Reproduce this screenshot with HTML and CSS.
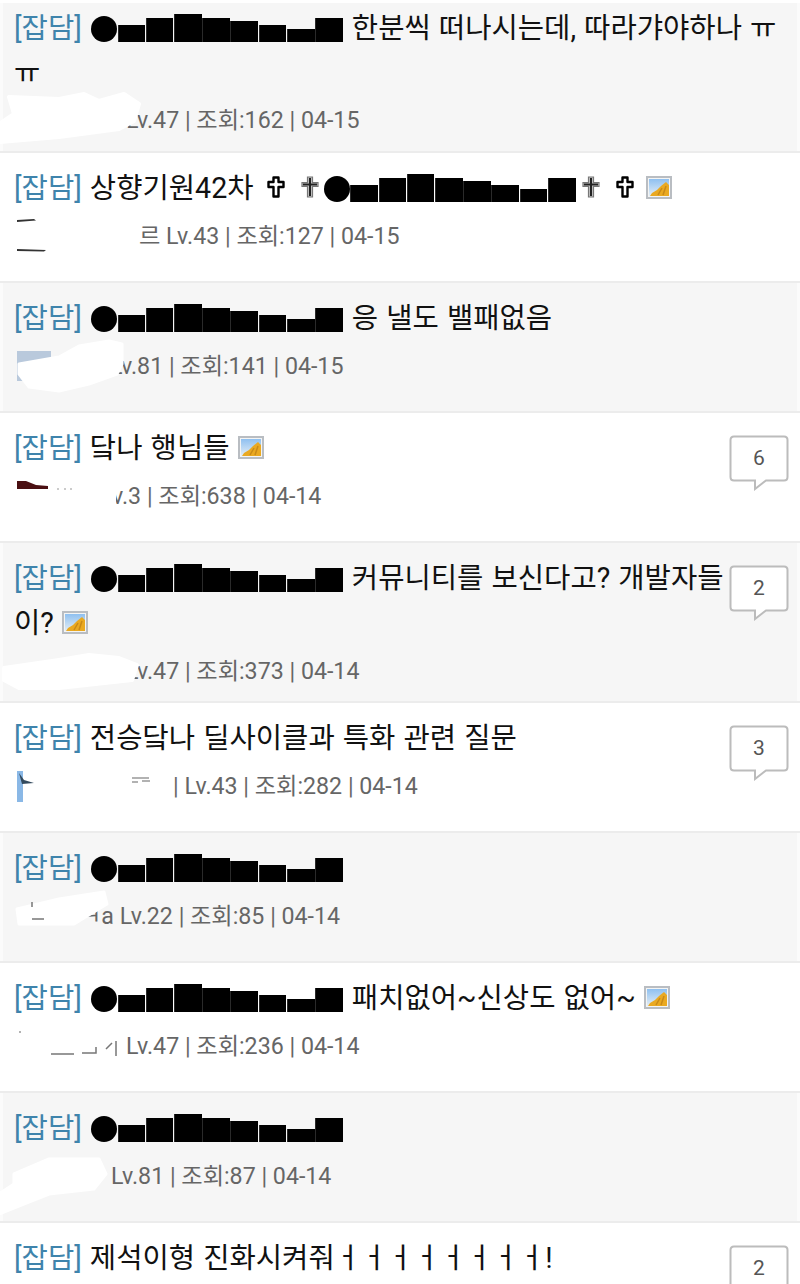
FILE: index.html
```html
<!DOCTYPE html>
<html lang="ko">
<head>
    <meta charset="UTF-8">
    <title>잡담 게시판</title>
    <link rel="stylesheet" href="styles.css">
</head>
<body>
    <svg class="defs" width="0" height="0">
        <defs>
            <linearGradient id="sky" x1="0" y1="0" x2="0" y2="1">
                <stop offset="0" stop-color="#8fc0f0"/>
                <stop offset="1" stop-color="#e4eef6"/>
            </linearGradient>
            <symbol id="pic" viewBox="0 0 26 23">
                <rect x="1" y="1" width="24" height="21" fill="#f3f4f4" stroke="#b9bdc2" stroke-width="2"/>
                <rect x="3" y="3" width="20" height="17" fill="url(#sky)"/>
                <path d="M4 20 L6 17 L11 14 L15 10 L20 6 L23 9 V20 Z" fill="#eaa921"/>
                <path d="M12 19 L16 12 M17 19 L20 10" stroke="#c98a18" stroke-width="1.5"/>
            </symbol>
            <symbol id="cross-w" viewBox="0 0 18 22">
                <path d="M6.5 1.5 H11.5 V6 H16.5 V11 H11.5 V20.5 H6.5 V11 H1.5 V6 H6.5 Z" fill="#fff" stroke="#000" stroke-width="2.4" stroke-linejoin="round"/>
            </symbol>
            <symbol id="cross-g" viewBox="0 0 18 22">
                <path d="M6.5 1 H11.5 V6.5 H17 V10.5 H11.5 V21 H6.5 V10.5 H1 V6.5 H6.5 Z" fill="#c4c4c4" stroke="#777" stroke-width="1.2"/>
                <path d="M9 2 V20 M2 8.5 H16" stroke="#222" stroke-width="2"/>
            </symbol>
            <symbol id="bubble" viewBox="0 0 60 56">
                <path d="M5 1.5 H55 Q58.5 1.5 58.5 5 V42 Q58.5 45.5 55 45.5 H37 L26 54 V45.5 H5 Q1.5 45.5 1.5 42 V5 Q1.5 1.5 5 1.5 Z" fill="#fff" stroke="#bcbcbc" stroke-width="2"/>
            </symbol>
        </defs>
    </svg>

    <div class="list">
        <div class="row alt first">
            <div class="main">
                <div class="title"><span class="tag">[잡담]</span> <span class="mask"><i class="dot"></i><i class="b17"></i><i class="b24"></i><i class="b28"></i><i class="b24"></i><i class="b21"></i><i class="b17"></i><i class="b13"></i><i class="b24"></i></span> 한분씩 떠나시는데, 따라갸야하나 ㅠㅠ</div>
                <div class="meta">
                    <svg class="nick" width="112" height="30">
                        <path d="M-5 -6 L45 -4 L70 -9 L85 -2 L110 -9 L125 1 L120 18 L105 26 L45 34 L-15 39 L-15 21 L0 11 Z" fill="#fff" stroke="#fff" stroke-width="4" stroke-linejoin="round"/>
                    </svg>
                    <span>Lv.47 | 조회:162 | 04-15</span>
                </div>
            </div>
        </div>

        <div class="row">
            <div class="main">
                <div class="title"><span class="tag">[잡담]</span> 상향기원42차 <svg class="cross lead"><use href="#cross-w"/></svg><svg class="cross gap"><use href="#cross-g"/></svg><span class="mask"><i class="dot"></i><i class="b17"></i><i class="b24"></i><i class="b28"></i><i class="b24"></i><i class="b21"></i><i class="b17"></i><i class="b13"></i><i class="b24"></i></span><svg class="cross"><use href="#cross-g"/></svg><svg class="cross gap"><use href="#cross-w"/></svg> <svg class="pic"><use href="#pic"/></svg></div>
                <div class="meta">
                    <svg class="nick" width="125" height="30">
                        <path d="M3 1 L20 0 L22 1.5 L3 3 Z" fill="#333"/>
                        <path d="M3 30 L32 31 L30 32.5 L3 32 Z" fill="#333"/>
                    </svg>
                    <span>르 Lv.43 | 조회:127 | 04-15</span>
                </div>
            </div>
        </div>

        <div class="row alt">
            <div class="main">
                <div class="title"><span class="tag">[잡담]</span> <span class="mask"><i class="dot"></i><i class="b17"></i><i class="b24"></i><i class="b28"></i><i class="b24"></i><i class="b21"></i><i class="b17"></i><i class="b13"></i><i class="b24"></i></span> 응 낼도 밸패없음</div>
                <div class="meta">
                    <svg class="nick" width="96" height="30">
                        <rect x="3" y="2" width="34" height="30" fill="#b9c9dc"/>
                        <path d="M5 15 L45 8 L65 -3 L95 -8 L108 -5 L108 15 L103 25 L75 35 L45 42 L15 38 L5 25 Z" fill="#fff" stroke="#fff" stroke-width="3" stroke-linejoin="round"/>
                    </svg>
                    <span>Lv.81 | 조회:141 | 04-15</span>
                </div>
            </div>
        </div>

        <div class="row">
            <div class="main">
                <div class="title"><span class="tag">[잡담]</span> 닼나 행님들 <svg class="pic"><use href="#pic"/></svg></div>
                <div class="meta">
                    <svg class="nick" width="87" height="30">
                        <path d="M3 2 L12 2 L22 6 L34 7 L34 10 L3 10 Z" fill="#4a0f12"/>
                        <path d="M43 10 H45 M50 10 H52 M56 10 H58" stroke="#bbb" stroke-width="1.5"/>
                        <rect x="84" y="0" width="18" height="30" fill="#fff"/>
                    </svg>
                    <span>Lv.3 | 조회:638 | 04-14</span>
                </div>
            </div>
            <svg class="bubble" viewBox="0 0 60 56"><use href="#bubble"/><text x="30" y="30">6</text></svg>
        </div>

        <div class="row alt two">
            <div class="main">
                <div class="title"><span class="tag">[잡담]</span> <span class="mask"><i class="dot"></i><i class="b17"></i><i class="b24"></i><i class="b28"></i><i class="b24"></i><i class="b21"></i><i class="b17"></i><i class="b13"></i><i class="b24"></i></span> 커뮤니티를 보신다고? 개발자들이? <svg class="pic"><use href="#pic"/></svg></div>
                <div class="meta">
                    <svg class="nick" width="112" height="30">
                        <path d="M5 10 V15 H15 M85 9 H92 V15 M100 8 V14" fill="none" stroke="#555" stroke-width="1.5"/>
                        <path d="M-10 14 L45 6 L75 1 L105 4 L123 11 L118 26 L45 34 L5 34 L-10 26 Z" fill="#fff" stroke="#fff" stroke-width="4" stroke-linejoin="round"/>
                    </svg>
                    <span>Lv.47 | 조회:373 | 04-14</span>
                </div>
            </div>
            <svg class="bubble" viewBox="0 0 60 56"><use href="#bubble"/><text x="30" y="30">2</text></svg>
        </div>

        <div class="row">
            <div class="main">
                <div class="title"><span class="tag">[잡담]</span> 전승닼나 딜사이클과 특화 관련 질문</div>
                <div class="meta">
                    <svg class="nick" width="159" height="30">
                        <rect x="3" y="2" width="6" height="31" fill="#8ab8e6"/>
                        <path d="M5 4 L10 11 L20 14 L8 15 Z" fill="#334a5e"/>
                        <path d="M118 9 H135 M118 13 H124 M128 12 H136" stroke="#999" stroke-width="1.5"/>
                    </svg>
                    <span>| Lv.43 | 조회:282 | 04-14</span>
                </div>
            </div>
            <svg class="bubble" viewBox="0 0 60 56"><use href="#bubble"/><text x="30" y="30">3</text></svg>
        </div>

        <div class="row alt">
            <div class="main">
                <div class="title"><span class="tag">[잡담]</span> <span class="mask"><i class="dot"></i><i class="b17"></i><i class="b24"></i><i class="b28"></i><i class="b24"></i><i class="b21"></i><i class="b17"></i><i class="b13"></i><i class="b24"></i></span></div>
                <div class="meta">
                    <svg class="nick" width="66" height="30">
                        <path d="M3 10 L45 0 L90 -7 L93 5 L60 25 L5 25 Z" fill="#fff" stroke="#fff" stroke-width="3" stroke-linejoin="round"/>
                        <path d="M18 3 V8 M18 20 H30" stroke="#777" stroke-width="1.5"/>
                    </svg>
                    <span>ㅋa Lv.22 | 조회:85 | 04-14</span>
                </div>
            </div>
        </div>

        <div class="row">
            <div class="main">
                <div class="title"><span class="tag">[잡담]</span> <span class="mask"><i class="dot"></i><i class="b17"></i><i class="b24"></i><i class="b28"></i><i class="b24"></i><i class="b21"></i><i class="b17"></i><i class="b13"></i><i class="b24"></i></span> 패치없어~신상도 없어~ <svg class="pic"><use href="#pic"/></svg></div>
                <div class="meta">
                    <svg class="nick" width="112" height="30">
                        <path d="M37 25 H60 M68 24 H82 V18 M92 20 L98 14 M102 12 V27" fill="none" stroke="#777" stroke-width="1.5"/>
                        <path d="M6 2 V4" stroke="#999" stroke-width="1.5"/>
                    </svg>
                    <span>Lv.47 | 조회:236 | 04-14</span>
                </div>
            </div>
        </div>

        <div class="row alt">
            <div class="main">
                <div class="title"><span class="tag">[잡담]</span> <span class="mask"><i class="dot"></i><i class="b17"></i><i class="b24"></i><i class="b28"></i><i class="b24"></i><i class="b21"></i><i class="b17"></i><i class="b13"></i><i class="b24"></i></span></div>
                <div class="meta">
                    <svg class="nick" width="97" height="30">
                        <path d="M3 32 L9 35" stroke="#9aa7b5" stroke-width="3"/>
                        <path d="M0 15 L35 0 L85 0 L92 15 L80 30 L35 35 L-15 55 L-15 35 L0 25 Z" fill="#fff" stroke="#fff" stroke-width="3" stroke-linejoin="round"/>
                    </svg>
                    <span>Lv.81 | 조회:87 | 04-14</span>
                </div>
            </div>
        </div>

        <div class="row">
            <div class="main">
                <div class="title"><span class="tag">[잡담]</span> 제석이형 진화시켜줘ㅓㅓㅓㅓㅓㅓㅓㅓ!</div>
            </div>
            <svg class="bubble" viewBox="0 0 60 56"><use href="#bubble"/><text x="30" y="30">2</text></svg>
        </div>
    </div>
</body>
</html>
```

FILE: styles.css
```css
body {
    margin: 0;
    background: #fff;
    font-family: Roboto, "Noto Sans CJK KR", sans-serif;
    color: #111;
}
.defs {
    display: block;
}
.list {
    box-sizing: border-box;
    height: 1284px;
    padding-top: 3px;
    overflow: hidden;
}
.row {
    display: flex;
    box-sizing: border-box;
    min-height: 130px;
    padding: 13px 11px 18px 14px;
    background: #fff;
    border-bottom: 2px solid #ececec;
}
.row.alt {
    background: #f6f6f6;
    box-shadow: inset 3px 0 #fbfbfb, inset -3px 0 #fbfbfb;
}
.row.first {
    padding-top: 3px;
    padding-bottom: 19px;
}
.first .meta {
    margin-top: 8px;
}
.main {
    flex: 1;
    min-width: 0;
}
.title {
    font-size: 28.6px;
    line-height: 45px;
    word-spacing: 1px;
}
.tag {
    color: #3f84ac;
}
.mask {
    display: inline-flex;
    align-items: flex-end;
    height: 28px;
    margin: 0 1px;
    vertical-align: -4px;
}
.mask i {
    display: block;
    width: 27.6px;
    margin-left: 0.65px;
    background: #000;
    box-shadow: inset 1px 0 #2a2a2a;
}
.mask .dot {
    width: 26px;
    height: 26px;
    margin-left: 0;
    border-radius: 50%;
    box-shadow: none;
}
.mask .b13 { height: 13px; }
.mask .b17 { height: 17px; }
.mask .b21 { height: 21px; }
.mask .b24 { height: 24px; }
.mask .b28 { height: 28px; }
.cross {
    width: 18px;
    height: 22px;
    margin: 0 4px 0 5px;
    vertical-align: 0;
}
.cross.gap {
    margin-left: 12px;
}
.pic {
    width: 26px;
    height: 23px;
    vertical-align: -1px;
}
.meta {
    display: flex;
    align-items: center;
    height: 28px;
    margin-top: 9px;
    font-size: 23.2px;
    color: #666;
}
.nick {
    position: relative;
    flex: none;
    overflow: visible;
}
.bubble {
    flex: none;
    width: 60px;
    height: 56px;
    margin: 9px 0 0 1px;
}
.bubble text {
    font-family: Roboto, sans-serif;
    font-size: 21px;
    text-anchor: middle;
    fill: #555;
}
```
